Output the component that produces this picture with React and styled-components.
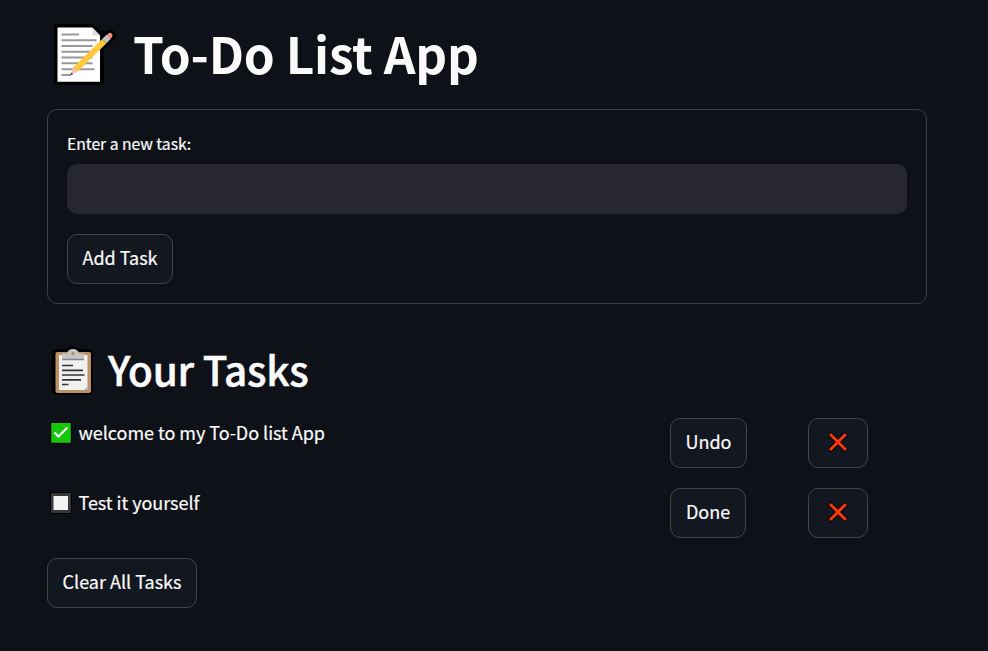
import React, { useState } from "react";
import styled, { createGlobalStyle } from "styled-components";

const GlobalStyle = createGlobalStyle`
  * { box-sizing: border-box; }
  body {
    margin: 0;
    min-height: 100vh;
    background: #0e1117;
    color: #fafafa;
    font-family: "Noto Sans CJK SC", "Open Sans", sans-serif;
    font-size: 18px;
    -webkit-text-stroke: 0.2px;
  }
`;

const Page = styled.main`
  width: 880px;
  margin: 0 0 0 47px;
  padding-top: 19px;
`;

const Title = styled.h1`
  display: flex;
  align-items: center;
  gap: 17px;
  height: 70px;
  margin: 0 0 20px;
  padding-left: 5px;
  font-size: 49.5px;
  font-weight: 700;
  line-height: 70px;
  letter-spacing: -0.2px;
  white-space: nowrap;
  -webkit-text-stroke: 0;
`;

const Subtitle = styled.h2`
  display: flex;
  align-items: center;
  gap: 14px;
  height: 54px;
  margin: 40px 0 20px;
  padding-left: 4px;
  font-size: 40.5px;
  font-weight: 500;
  line-height: 54px;
  letter-spacing: -0.27px;
  white-space: nowrap;
  -webkit-text-stroke: 0.5px;
`;

const Heading = styled.span`
  padding-bottom: ${(p) => p.$lift}px;
`;

const Art = styled.svg`
  display: block;
  flex: none;
  overflow: visible;
`;

const Form = styled.form`
  display: flex;
  flex-direction: column;
  align-items: flex-start;
  height: 195px;
  padding: 19px;
  border: 1px solid #3c3f43;
  border-radius: 10px;
`;

const Label = styled.label`
  height: 30px;
  margin-bottom: 5px;
  font-size: 15.75px;
  line-height: 30px;
  letter-spacing: -0.05px;
`;

const Input = styled.input`
  width: 100%;
  height: 50px;
  margin-bottom: 20px;
  padding: 0 15px;
  border: 0;
  border-radius: 10px;
  outline: none;
  background: #262730;
  color: inherit;
  font: inherit;
`;

const Button = styled.button`
  display: inline-flex;
  align-items: center;
  justify-content: center;
  width: ${(p) => p.$width}px;
  height: 50px;
  padding: 0 0 ${(p) => (p.$icon ? 2 : 5)}px;
  border: 1px solid #41444c;
  border-radius: 10px;
  background: #131720;
  color: inherit;
  font: inherit;
  line-height: 30px;
  white-space: nowrap;
  cursor: pointer;
`;

const List = styled.div`
  display: grid;
  gap: 20px;
  margin-bottom: 20px;
`;

const Row = styled.div`
  display: grid;
  grid-template-columns: 623px 138px auto;
  justify-items: start;
  height: 50px;
`;

const Task = styled.div`
  display: flex;
  align-items: center;
  gap: 7.5px;
  height: 30px;
  padding-left: 4px;
`;

const TaskName = styled.span`
  padding-bottom: 2px;
  letter-spacing: -0.04px;
`;

const Memo = () => (
  <Art width="64" height="64" viewBox="0 0 64 64">
    <path d="M2 2H42L48.5 8.5L53 9V25L52 26V63H2Z" fill="#000" />
    <path d="M50 21L57.5 13.7" stroke="#000" strokeWidth="12" strokeLinecap="round" />
    <path d="M5.5 5.5H40L48 13.5V59.7H5.5Z" fill="#fff" />
    <path d="M40.5 5.5V13.5H48Z" fill="#dedede" />
    <path d="M9.5 12.5H27M9.5 18.3H44.5M9.5 24H40.5M9.5 29.8H44.5M9.5 35.5H40.5M9.5 41.3H40.5M9.5 47.2H42.5M9.5 53H19" stroke="#999" strokeWidth="2" />
    <path d="M57 14.4L58 13.4" stroke="#f68f82" strokeWidth="5" strokeLinecap="round" />
    <path d="M52.3 19.1L56.6 14.9" stroke="#c4c4c4" strokeWidth="6" />
    <path d="M23.5 47.4L52.3 19.1" stroke="#ffc83d" strokeWidth="6" />
    <path d="M21.4 45.3L25.6 49.5L18 53.5Z" fill="#f8c7ae" />
    <path d="M19.5 50.5L17.7 53.7L21.2 52Z" fill="#444" />
  </Art>
);

const Clipboard = () => (
  <Art width="43" height="50" viewBox="0 0 43 50">
    <path d="M5 3H14Q16 0 20.5 0Q25 0 27 3H37Q42 3 42 8V44Q42 49 37 49H6Q1 49 1 44V8Q1 3 5 3Z" fill="#000" />
    <rect x="4.5" y="6" width="35.5" height="41" rx="2" fill="#bd9166" />
    <path d="M8 9H36.5V44H8Z" fill="#f1f1f1" />
    <path d="M33 44L36.5 40.5V44Z" fill="#b5b5b5" />
    <path d="M11 7.5H16Q17 3 22 3Q27 3 28 7.5H33V13H11Z" fill="#c6c6c6" />
    <path d="M11 13.5H33" stroke="#858585" strokeWidth="1.5" />
    <circle cx="22" cy="7.5" r="1.7" fill="#bd9166" />
    <path d="M11 19.5H22M11 24.3H32M11 29H33.5M11 33.8H30M11 38.5H17.5" stroke="#333" strokeWidth="1.7" />
  </Art>
);

const Status = ({ done }) => (
  <Art width="20" height="22" viewBox="0 0 20 22">
    <rect x="-1" y="0" width="22" height="22" fill="#000" />
    {done ? (
      <>
        <rect y="1" width="20" height="20" fill="#129b0c" />
        <rect x="1" y="1" width="18" height="19" fill="#16c60c" />
        <path d="M3.5 10.5L7.4 14.5L16.5 5.5" fill="none" stroke="#fff" strokeWidth="2" />
      </>
    ) : (
      <>
        <rect y="1" width="20" height="20" fill="#383838" />
        <rect x="2.5" y="4" width="14.5" height="14" fill="#f2f2f2" />
      </>
    )}
  </Art>
);

const Cross = () => (
  <Art width="20" height="20" viewBox="0 0 20 20">
    <path d="M1.5 1.5L18.5 18.5M18.5 1.5L1.5 18.5" stroke="#000" strokeWidth="5" />
    <path d="M2 2L18 18M18 2L2 18" stroke="#f8390f" strokeWidth="3" />
  </Art>
);

export default function App() {
  const [text, setText] = useState("");
  const [tasks, setTasks] = useState([
    { name: "welcome to my To-Do list App", done: true },
    { name: "Test it yourself", done: false },
  ]);

  const addTask = (event) => {
    event.preventDefault();
    if (!text.trim()) return;
    setTasks([...tasks, { name: text.trim(), done: false }]);
    setText("");
  };
  const toggle = (index) =>
    setTasks(tasks.map((t, i) => (i === index ? { ...t, done: !t.done } : t)));
  const remove = (index) => setTasks(tasks.filter((_, i) => i !== index));

  return (
    <>
      <GlobalStyle />
      <Page>
        <Title><Memo /><Heading $lift={2}>To-Do List App</Heading></Title>
        <Form onSubmit={addTask}>
          <Label htmlFor="task">Enter a new task:</Label>
          <Input id="task" value={text} onChange={(e) => setText(e.target.value)} />
          <Button $width={106}>Add Task</Button>
        </Form>
        <Subtitle><Clipboard /><Heading $lift={5}>Your Tasks</Heading></Subtitle>
        <List>
          {tasks.map((task, index) => (
            <Row key={index}>
              <Task><Status done={task.done} /><TaskName>{task.name}</TaskName></Task>
              <Button $width={task.done ? 77 : 76} onClick={() => toggle(index)}>
                {task.done ? "Undo" : "Done"}
              </Button>
              <Button $width={60} $icon aria-label="Delete" onClick={() => remove(index)}><Cross /></Button>
            </Row>
          ))}
        </List>
        <Button $width={150} onClick={() => setTasks([])}>Clear All Tasks</Button>
      </Page>
    </>
  );
}
